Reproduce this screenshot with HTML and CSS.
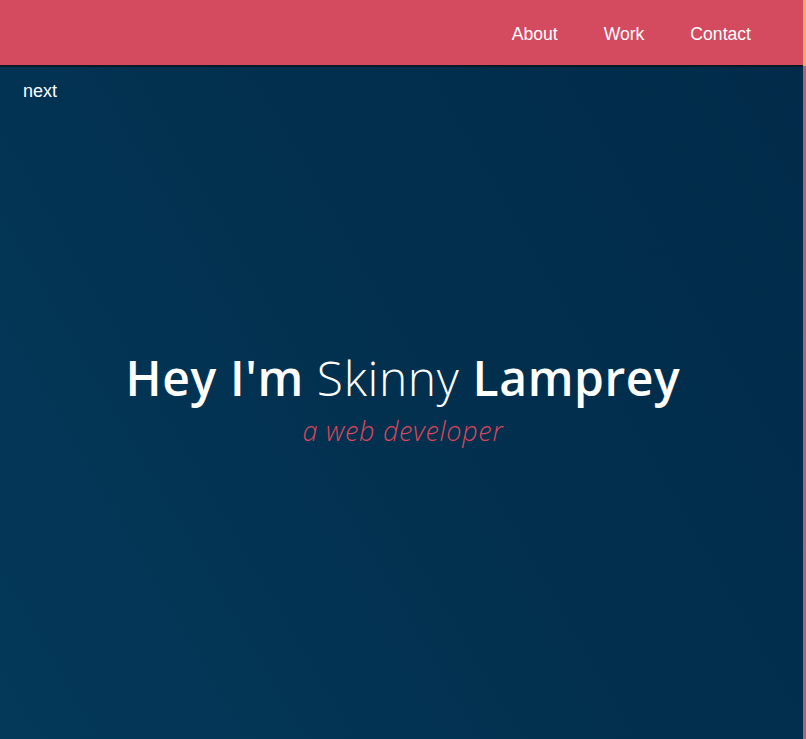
FILE: index.html
```html
<!DOCTYPE html>
<html lang="en">
<head>
<meta charset="utf-8">
<title>Skinny Lamprey</title>
<link rel="stylesheet" href="styles.css">
</head>
<body>
<div class="page">
  <div class="site">
    <header class="topbar">
      <nav class="nav">
        <a href="#about">About</a>
        <a href="#work">Work</a>
        <a href="#contact">Contact</a>
      </nav>
    </header>
    <main class="hero">
      <a class="next" href="#next">next</a>
      <div class="intro">
        <h1 class="title"><strong>Hey I'm</strong> Skinny <strong>Lamprey</strong></h1>
        <p class="subtitle">a web developer</p>
      </div>
    </main>
  </div>
  <div class="edge"></div>
</div>
</body>
</html>
```
FILE: styles.css
```css
html, body {
  margin: 0;
  padding: 0;
  height: 100%;
}
body {
  font-family: "Liberation Sans", Arial, sans-serif;
  background: #022f4d;
}
.page {
  display: flex;
  height: 739px;
}
.site {
  flex: 1;
  display: flex;
  flex-direction: column;
  min-width: 0;
}
.edge {
  width: 3px;
  background: linear-gradient(#f2ad62 0, #f2ad62 66px, #a5687a 66px, #a5687a 100%);
}
.topbar {
  height: 65px;
  background: #d44a5e;
  box-shadow: 0 2px 0 #0c1a26;
  position: relative;
  z-index: 1;
  display: flex;
  justify-content: flex-end;
  align-items: center;
  padding-right: 52px;
}
.nav {
  display: flex;
  gap: 46px;
  padding-top: 4px;
}
.nav a {
  color: #ffffff;
  text-decoration: none;
  font-size: 17.6px;
}
.hero {
  flex: 1;
  display: grid;
  background: linear-gradient(60deg, #04395a 0%, #02304f 50%, #012b49 100%);
}
.next, .intro {
  grid-area: 1 / 1;
}
.next {
  justify-self: start;
  align-self: start;
  margin: 16px 0 0 23px;
  color: #ffffff;
  text-decoration: none;
  font-size: 18px;
}
.intro {
  align-self: center;
  justify-self: center;
  text-align: center;
  padding-left: 3px;
  padding-bottom: 8px;
}
.title {
  margin: 0;
  font-family: "Open Sans", sans-serif;
  font-weight: 300;
  font-size: 48px;
  letter-spacing: 0.6px;
  line-height: 60px;
  color: #ffffff;
}
.title strong {
  font-weight: 600;
}
.subtitle {
  margin: 6px 0 0;
  font-family: "Open Sans", sans-serif;
  font-style: italic;
  font-weight: 300;
  font-size: 27px;
  letter-spacing: 0.7px;
  line-height: 34px;
  color: #d9475d;
}
```
